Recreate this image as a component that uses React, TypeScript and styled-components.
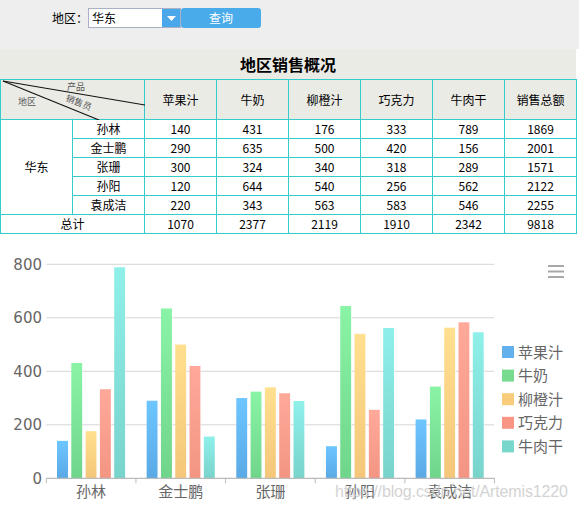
import React from "react";
import styled, { createGlobalStyle } from "styled-components";

const Global = createGlobalStyle`
  html, body { margin: 0; padding: 0; background: #ffffff; }
  body { font-family: "Noto Sans CJK SC", sans-serif; color: #000; }
`;

const Page = styled.div`
  width: 579px;
  height: 509px;
  overflow: hidden;
  display: flex;
  flex-direction: column;
  & > * { flex-shrink: 0; }
`;

const TopBar = styled.div`
  height: 49px;
  box-sizing: border-box;
  background: #eeeeee;
  padding: 8px 0 0 52px;
  display: flex;
  align-items: flex-start;
`;

const Label = styled.span`
  font-size: 12px;
  line-height: 20px;
`;

const SelectBox = styled.div`
  display: flex;
  height: 20px;
  box-sizing: border-box;
  border: 1px solid #aab0c6;
  background: #fff;
  width: 93px;
`;

const SelectText = styled.div`
  flex: 1;
  font-size: 12px;
  line-height: 18px;
  padding-left: 3px;
`;

const DropBtn = styled.div`
  width: 18px;
  background: #4aa8ea;
  display: flex;
  align-items: center;
  justify-content: center;
`;

const QueryBtn = styled.div`
  width: 80px;
  height: 20px;
  background: #4aabeb;
  color: #fff;
  font-size: 12px;
  line-height: 20px;
  text-align: center;
  border-radius: 3px;
`;

const TitleBar = styled.div`
  width: 576px;
  height: 30px;
  background: #ebebe6;
  font-size: 16px;
  font-weight: bold;
  line-height: 30px;
  text-align: center;
`;

const Table = styled.table`
  border-collapse: collapse;
  table-layout: fixed;
  width: 577px;
  font-size: 12px;
`;

const Cell = styled.td<{ $head?: boolean }>`
  border: 1px solid #33cccc;
  padding: 0;
  height: ${(p) => (p.$head ? "39px" : "18px")};
  line-height: 16px;
  text-align: center;
  background: ${(p) => (p.$head ? "#ebebe6" : "#ffffff")};
  font-weight: normal;
`;

const DiagCell = styled(Cell)`
  position: relative;
`;

const DiagSvg = styled.svg`
  position: absolute;
  left: 0;
  top: 0;
`;

const DiagText = styled.span<{ $x: number; $y: number; $rot?: number }>`
  position: absolute;
  left: ${(p) => p.$x}px;
  top: ${(p) => p.$y}px;
  font-size: 9px;
  line-height: 10px;
  color: #555;
  font-family: "Noto Sans CJK SC", serif;
  transform: rotate(${(p) => p.$rot ?? 0}deg);
  transform-origin: left top;
  white-space: nowrap;
`;

const ChartWrap = styled.div`
  height: 275px;
`;

const products = ["苹果汁", "牛奶", "柳橙汁", "巧克力", "牛肉干"];
const rows: [string, number[]][] = [
  ["孙林", [140, 431, 176, 333, 789]],
  ["金士鹏", [290, 635, 500, 420, 156]],
  ["张珊", [300, 324, 340, 318, 289]],
  ["孙阳", [120, 644, 540, 256, 562]],
  ["袁成洁", [220, 343, 563, 583, 546]],
];

const grads = [
  ["#6dc6ff", "#5aa9e5"],
  ["#8af4a6", "#6fd58a"],
  ["#ffe08e", "#f4c67a"],
  ["#ffa99a", "#f39583"],
  ["#8ff0ea", "#78d3cb"],
];
const legendColors = ["#62b1ed", "#77dc90", "#f9cc7c", "#f99585", "#78d6cc"];

const Chart: React.FC = () => {
  const base = 478.3;
  const k = 0.2675;
  const x0 = 46.3;
  const cw = 89.65;
  const off = 234;
  const font = '"DejaVu Sans", "Noto Sans CJK SC", sans-serif';
  return (
    <svg width={579} height={275} viewBox={`0 ${off} 579 275`}>
      <defs>
        {grads.map((g, i) => (
          <linearGradient key={i} id={`g${i}`} x1="0" y1="0" x2="0" y2="1">
            <stop offset="0" stopColor={g[0]} />
            <stop offset="1" stopColor={g[1]} />
          </linearGradient>
        ))}
      </defs>
      {[200, 400, 600, 800].map((v) => (
        <line key={v} x1={x0} x2={494} y1={base - v * k} y2={base - v * k} stroke="#d6d6d6" strokeWidth={1} />
      ))}
      {[0, 200, 400, 600, 800].map((v) => (
        <text key={v} x={42} y={base - v * k + 5.5} textAnchor="end" fontSize={15} fill="#666" fontFamily={font}>
          {v}
        </text>
      ))}
      {rows.map(([name, vals], i) => (
        <g key={name}>
          {vals.map((v, j) => {
            const h = v * k;
            const x = x0 + i * cw + 10.7 + j * 14.3;
            return (
              <g key={j}>
                <rect x={x} y={base - h} width={11} height={h} fill={`url(#g${j})`} />
                <rect x={x + 11} y={base - h} width={0.8} height={h} fill="#ffffff" opacity={0.6} />
              </g>
            );
          })}
          <text x={x0 + i * cw + cw / 2} y={497} textAnchor="middle" fontSize={15} fill="#666" fontFamily={font}>
            {name}
          </text>
        </g>
      ))}
      <line x1={x0} x2={494.5} y1={base} y2={base} stroke="#bbbbbb" strokeWidth={1.3} />
      {[0, 1, 2, 3, 4, 5].map((i) => (
        <line key={i} x1={x0 + i * cw} x2={x0 + i * cw} y1={base} y2={base + 5} stroke="#bbbbbb" strokeWidth={1} />
      ))}
      {products.map((p, i) => {
        const cy = 352 + i * 23.6;
        return (
          <g key={p}>
            <rect x={502} y={cy - 6} width={12} height={12} fill={legendColors[i]} />
            <text x={518} y={cy + 5.5} fontSize={15} fill="#666" fontFamily={font}>
              {p}
            </text>
          </g>
        );
      })}
      {[266, 271.5, 277].map((y) => (
        <rect key={y} x={548} y={y - 1} width={16} height={2} fill="#a8a8a8" />
      ))}
      <text
        x={335}
        y={497}
        fontSize={16}
        fill="#cfcfcf"
        opacity={0.9}
        textLength={233}
        fontFamily='"Liberation Sans", sans-serif'
      >
        https://blog.csdn.net/Artemis1220
      </text>
    </svg>
  );
};

export default function App() {
  const totals = [0, 1, 2, 3, 4].map((j) => rows.reduce((s, r) => s + r[1][j], 0));
  const grand = totals.reduce((a, b) => a + b, 0);
  return (
    <Page>
      <Global />
      <TopBar>
        <Label>地区：</Label>
        <SelectBox>
          <SelectText>华东</SelectText>
          <DropBtn>
            <svg width="9" height="5" viewBox="0 0 9 5">
              <path d="M0 0 L9 0 L4.5 5 Z" fill="#fff" />
            </svg>
          </DropBtn>
        </SelectBox>
        <QueryBtn>查询</QueryBtn>
      </TopBar>
      <TitleBar>地区销售概况</TitleBar>
      <Table>
        <colgroup>
          {Array.from({ length: 8 }).map((_, i) => (
            <col key={i} style={{ width: 72 }} />
          ))}
        </colgroup>
        <thead>
          <tr>
            <DiagCell as="th" $head colSpan={2}>
              <DiagSvg width="144" height="40" viewBox="0 0 144 40">
                <line x1="2" y1="1" x2="144" y2="25" stroke="#111" strokeWidth="1.1" />
                <line x1="2" y1="1" x2="98" y2="40" stroke="#111" strokeWidth="1.1" />
              </DiagSvg>
              <DiagText $x={66} $y={2}>产品</DiagText>
              <DiagText $x={67} $y={13} $rot={22}>销售员</DiagText>
              <DiagText $x={17} $y={17}>地区</DiagText>
            </DiagCell>
            {products.map((p) => (
              <Cell as="th" $head key={p}>
                {p}
              </Cell>
            ))}
            <Cell as="th" $head>销售总额</Cell>
          </tr>
        </thead>
        <tbody>
          {rows.map(([name, vals], i) => (
            <tr key={name}>
              {i === 0 && <Cell rowSpan={5}>华东</Cell>}
              <Cell>{name}</Cell>
              {vals.map((v, j) => (
                <Cell key={j}>{v}</Cell>
              ))}
              <Cell>{vals.reduce((a, b) => a + b, 0)}</Cell>
            </tr>
          ))}
          <tr>
            <Cell colSpan={2}>总计</Cell>
            {totals.map((t, j) => (
              <Cell key={j}>{t}</Cell>
            ))}
            <Cell>{grand}</Cell>
          </tr>
        </tbody>
      </Table>
      <ChartWrap>
        <Chart />
      </ChartWrap>
    </Page>
  );
}
